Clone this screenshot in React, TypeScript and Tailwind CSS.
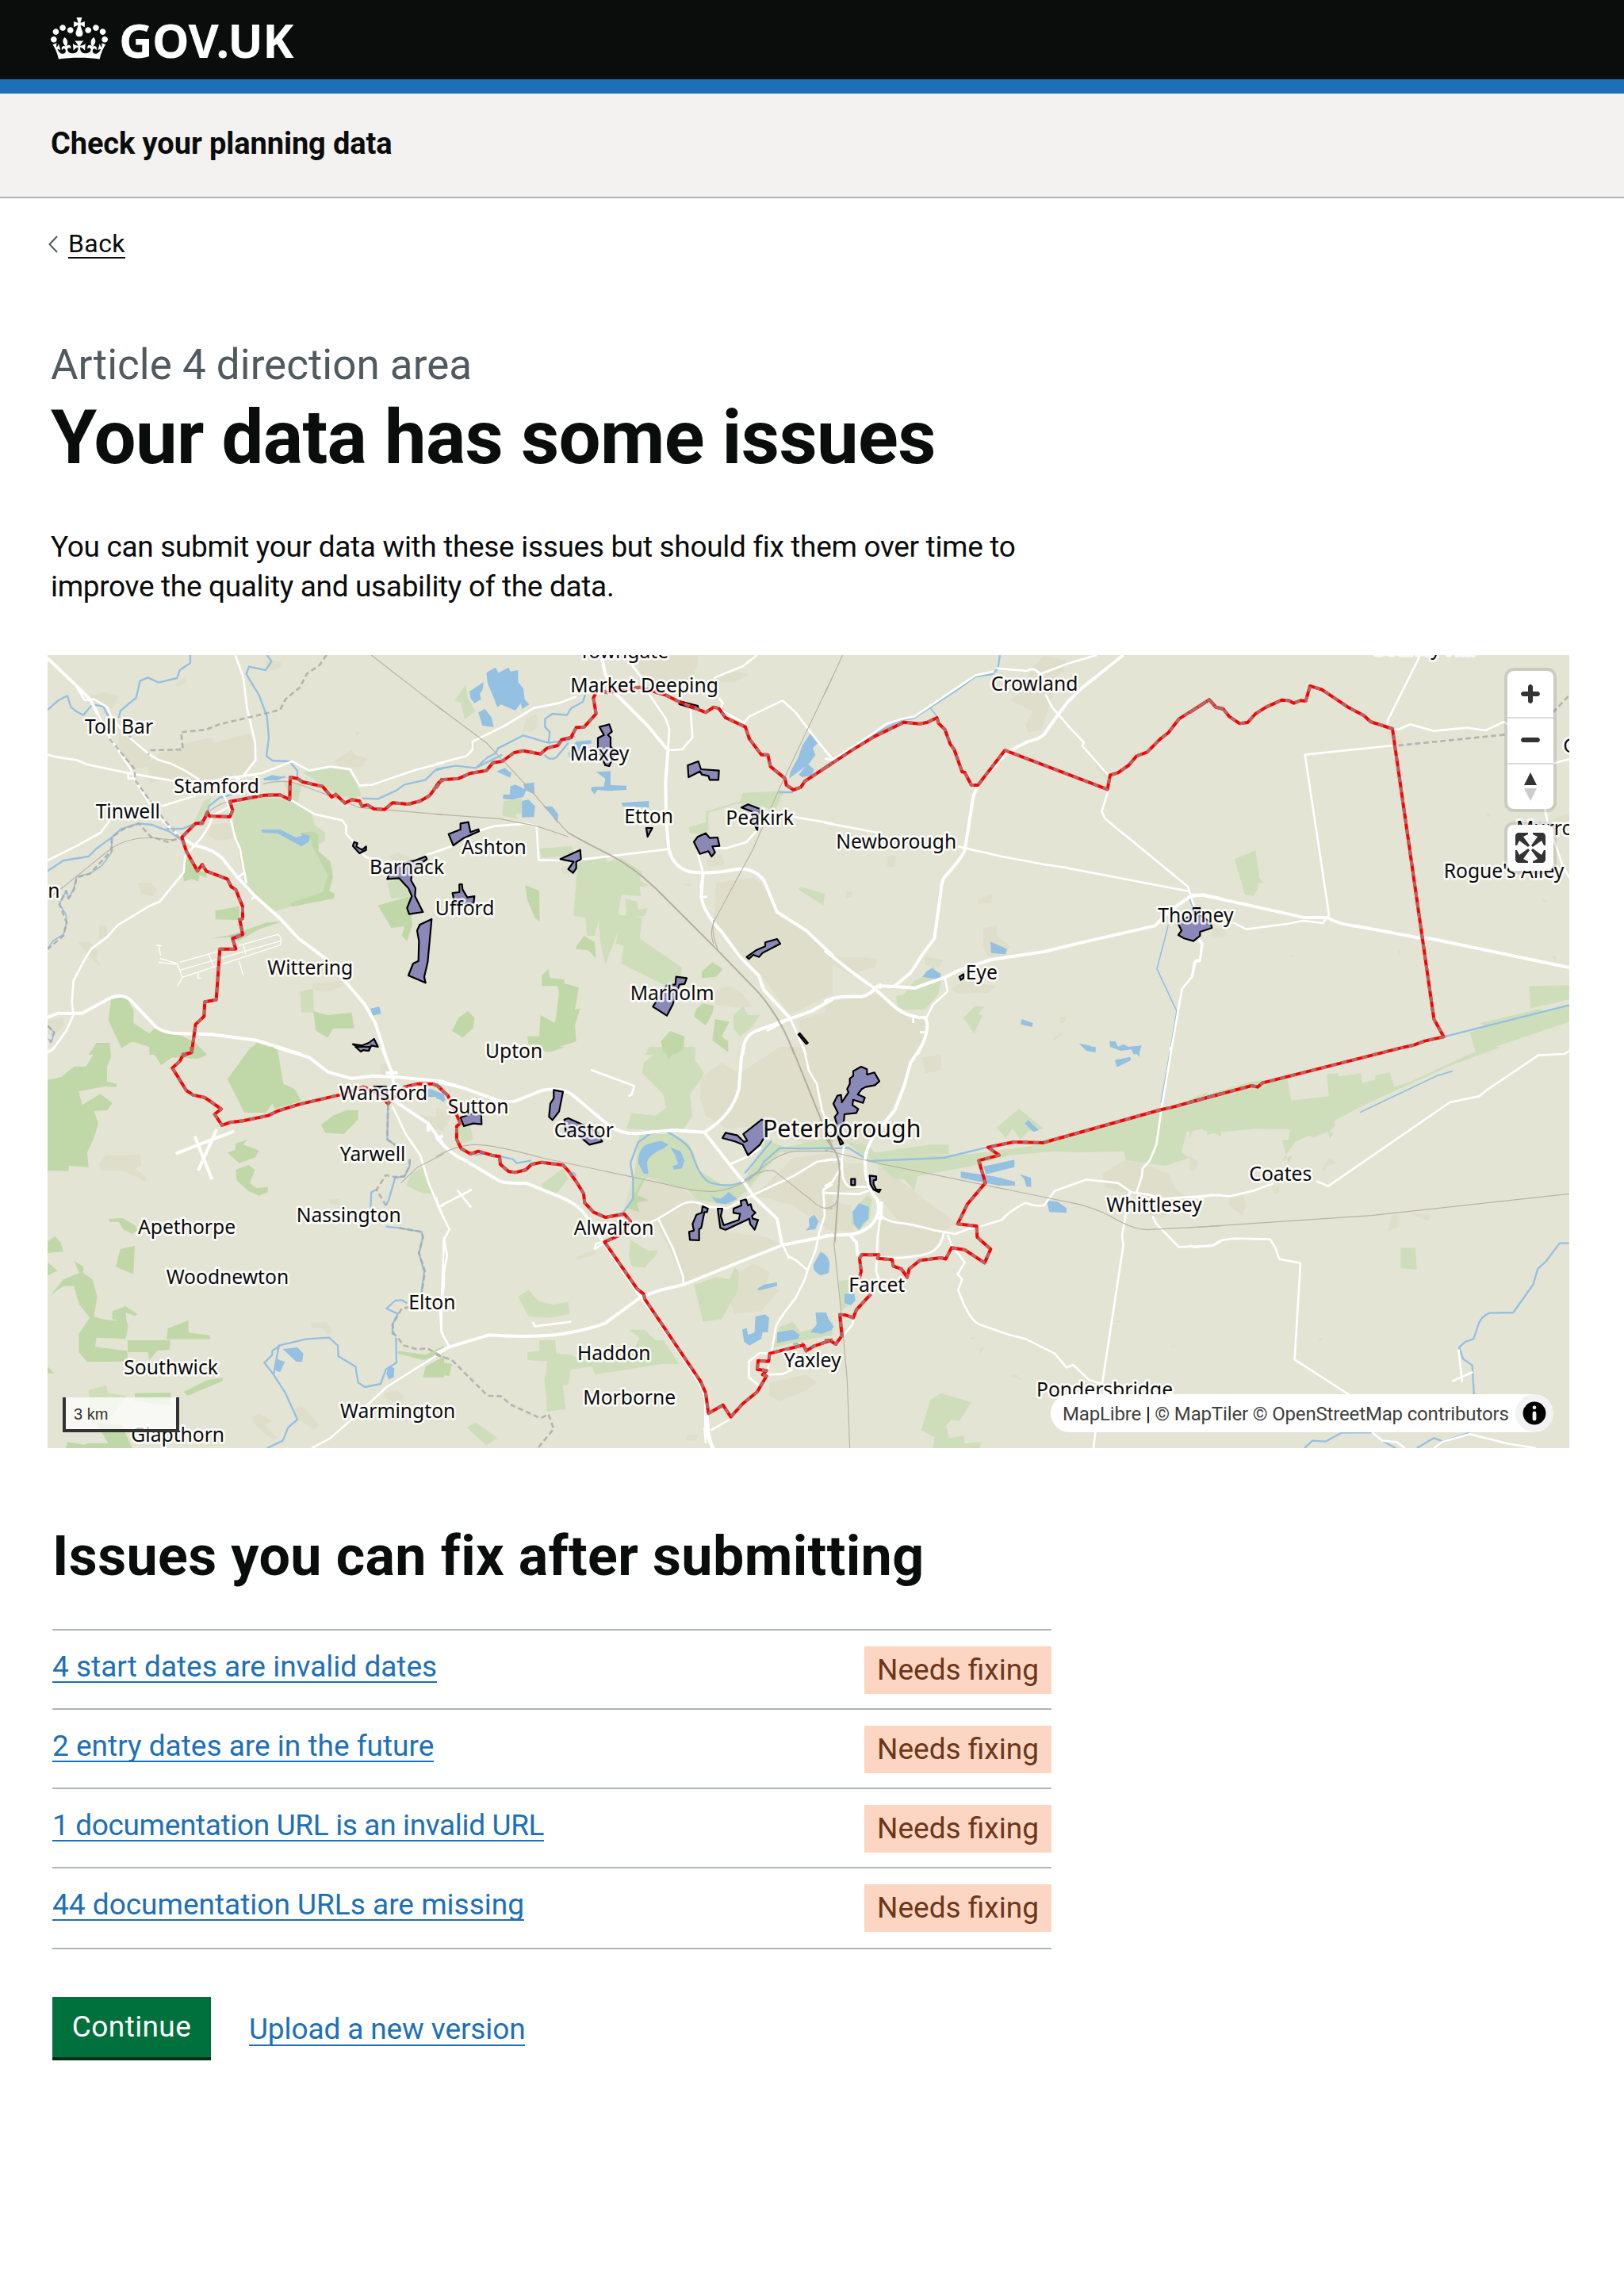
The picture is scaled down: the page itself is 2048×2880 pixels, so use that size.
type Tile = {
  at: [number, number];
  town?: string;
  park?: string;
  wood?: string;
  water?: string;
  river?: string;
  stream?: string;
  trunk?: string;
  road?: string;
  lane?: string;
  rail?: string;
  railMain?: string;
  county?: string;
  boundary?: string;
  area?: string;
  labels?: [string, number, number, number?][];
};

/* Map features, in thirds of a pixel, relative to each tile's origin. */
const tiles: Tile[] = [
  {
    at: [0, 0],
    town:
      "M150 175L215 160 270 175 240 220 180 200ZM480 130L520 100 525 120 495 138ZM380 430L420 390 500 370 520 350 620 330 630 350 760 315 785 350 787 410 740 470 690 490 600 495 470 490 385 500ZM270 300L330 340 390 400 380 440 320 450 270 380ZM620 660L700 650 705 710 640 720 605 700ZM820 40L880 40 885 60 840 80ZM1080 420L1150 375 1160 395 1210 410 1190 440 1150 445 1100 435ZM340 880L390 880 415 905 400 930 355 920ZM115 1105L160 1100 190 1140 185 1170 205 1200 160 1160ZM195 1040L225 1040 225 1090 195 1090ZM1000 1260L1110 1250 1120 1270 1050 1295 1005 1280ZM0 1400L60 1390 60 1420 20 1460 0 1450ZM1285 780L1330 765 1390 790 1340 810ZM1165 305L1180 310 1170 325Z",
    park:
      "M555 650L590 570 620 555 610 600 560 655ZM700 590L740 565 810 555 900 560 1000 620 1010 660 1050 690 1050 720 1010 740 1040 800 1080 830 1060 930 920 970 860 988 800 940 740 870 720 740 705 690ZM965 462L1050 440 1140 455 1170 500 1188 550 1160 560 1100 550 1040 510ZM895 500L960 505 955 540 945 580 920 565ZM1285 880L1340 860 1370 930 1300 940ZM955 1290L1005 1280 1008 1370 960 1370Z",
    wood:
      "M530 770L560 830 605 840 600 860 575 850 570 875 545 865 515 875 512 840ZM960 690L1005 685 1025 700 1025 760 1070 800 1080 860 1065 910 1085 920 1085 938 925 970 920 955 1040 915 1060 850 1000 740 1000 720ZM635 985L725 968 725 1020 635 1018ZM620 1090L700 1075 830 1030 890 1025 800 1055 720 1100 690 1085ZM1250 965L1370 930 1380 1040 1360 1100 1340 1080 1350 1045 1300 1050ZM1005 1365L1060 1380 1150 1370 1160 1430 1080 1430 1060 1465 1015 1440ZM240 1320L295 1310 325 1360 325 1410 385 1450 385 1500 320 1480 280 1505 230 1400ZM405 1430L500 1455 560 1485 603 1530 385 1530 385 1450ZM185 1485L235 1485 240 1530 155 1530ZM790 1485L868 1510 870 1530 750 1530Z",
    water:
      "M808 678L880 678 940 708 965 700 955 690 992 702 990 722 960 742 870 692 812 690ZM815 485L850 472 895 480 870 492 820 492ZM690 1080L750 1065 750 1075 720 1095 695 1088ZM1222 1355L1255 1348 1262 1375 1230 1382Z",
    river:
      "M0 225L40 190 75 172 88 215 110 232 135 245 170 205 210 212 230 250M270 255L275 230 310 200 335 180 350 115 380 103 420 122 490 105 500 75 540 48 540 18M830 18L847 42 825 75 762 62 752 90 800 170 815 210 830 250 837 330 828 400 850 417 915 420 945 455 945 480M840 490L900 478M510 720L460 685 395 660 345 655 280 675 240 710 185 750 155 780 60 795 0 835M450 675L510 675 560 655 600 635 610 590 650 558 700 545M1190 560L1250 562 1320 530 1350 508 1430 490 1465 455 1500 445",
    stream:
      "M240 710L245 760 205 815 160 845 110 855 100 900 78 940 70 910 45 960 70 1000 72 1030 60 1075 20 1100 0 1130M0 1420L25 1445 15 1480 0 1470",
    trunk:
      "M0 30L105 130 160 185 190 240 M510 712L555 738Q620 750 660 785L720 860 785 930 880 1015 950 1090 1050 1165 1120 1245 1200 1340 1240 1410 1278 1530M0 1388L40 1373 130 1373 210 1330Q270 1290 310 1320L410 1425Q440 1448 500 1450L620 1453 790 1475 960 1528",
    road:
      "M190 240L235 330 315 450 330 490 385 580 440 650 510 712M105 130L140 188 175 185 225 215 245 260 310 330 380 390 420 415 470 430 520 455 575 490M0 395L30 403 110 415 150 432 300 463 470 493 600 500 700 480 790 470 M740 475L810 465 925 420 990 455 1070 440 1145 450 1180 512 1230 508 1400 450 1500 425M710 18L740 100 755 220 785 350 787 415 740 475 720 490 705 475M0 795L110 740 200 690 235 645 M430 590L560 550M665 545L690 600 695 650 710 710 728 750 750 875M690 590L625 625 610 665 585 705 520 780 515 840 425 950 380 970 265 1040 225 1085 165 1130 140 1170 98 1250 92 1330 98 1380 70 1440 20 1510 0 1522M920 565L1010 620 1115 643 1130 665 1130 695 1180 750 1200 780 1250 800M1430 775L1500 752M305 465L305 485 330 485M720 860L745 840 752 880M785 930L772 942",
    lane:
      "M500 1210L880 1100M500 1180L870 1075Q890 1085 880 1115L510 1237 490 1185M410 1115L430 1118M420 1115L428 1155M425 1165L490 1185M420 1180L485 1188M510 1237L490 1272M725 1175L740 1230M570 1220L568 1240 580 1240M610 1150L630 1200M740 1110L750 1150",
    rail:
      "M1225 18L1500 232M0 940L60 895 240 750Q310 705 400 710L480 718 M610 610Q640 585 680 573M815 505Q900 485 960 510L1080 555 1180 595 1500 622",
    county:
      "M1055 18L1030 55 980 90 955 140 900 185 880 225 820 240 650 280 600 300 505 310 512 375 390 378 380 395M315 330L280 300M235 335L330 450 330 490 440 640 500 710 455 725 390 705 345 655 290 675 245 705 240 760 160 845 110 860 100 905 80 938 70 910 45 960 72 1030 60 1080 0 1130M0 1420L25 1445 10 1485",
    boundary:
      "M1500 488L1480 500 1460 530 1445 550 1410 570 1365 582 1305 577 1275 602 1235 600 1210 585 1190 590 1180 570 1150 565 1125 578 1090 545 1075 555 1040 515 965 498 945 485 918 480 916 565 880 547 820 548 690 572 700 605 690 630 612 627 605 612 585 655 560 655 508 707 525 760 567 835 585 810 600 835 680 865 695 895 712 905 738 970 738 1015 727 1018 738 1075 700 1090 712 1130 652 1130 638 1322 595 1330 592 1385 560 1415 545 1522 508 1530",
    area:
      "M1155 740L1160 725 1172 730 1168 742 1190 755 1205 742 1205 755 1180 768ZM1285 865L1300 830 1345 805 1390 795 1430 780 1435 790 1380 830 1375 870 1392 900 1390 930 1420 990 1368 998 1360 975 1378 930 1365 900 1330 862ZM1408 1038L1453 1017 1438 1180 1425 1235 1430 1258 1365 1230 1383 1185 1403 1175 1405 1100 1398 1060ZM1155 1490L1190 1495 1215 1485 1235 1470 1250 1500 1225 1495 1215 1515 1185 1510Z",
    labels: [["Toll Bar", 145, 318], ["Stamford", 482, 543], ["Tinwell", 186, 638], ["n", 5, 938], ["Barnack", 1222, 848], ["Wittering", 836, 1229]],
  },
  {
    at: [1470, 0],
    town:
      "M340 260L380 240 385 290 360 310 330 300ZM760 20L990 20 990 60 960 110 880 130 800 110 770 80ZM1040 100L1130 80 1190 90 1130 120 1060 120ZM1020 790L1080 770 1090 810 1030 820ZM1060 880L1200 860 1250 900 1290 990 1400 1060 1500 1150 1500 1300 1340 1380 1230 1230 1150 1150 1050 1010ZM470 820L540 810 530 850 480 845ZM920 885L970 880 960 892ZM1040 1290L1110 1270 1160 1300 1200 1350 1130 1350 1060 1340ZM1370 1400L1500 1360 1500 1530 1400 1530ZM130 350L150 350 145 372 130 370Z",
    park:
      "M70 190L112 130 120 180 148 230 108 262 95 200ZM255 570L325 562 325 615 300 620 310 640 250 625ZM390 750L510 740 530 780 470 780 400 785ZM540 800L640 785 650 800 700 785 780 840 770 870 805 890 770 895 775 930 700 925 690 1000 780 1010 770 1090 930 1200 925 1240 870 1270 700 1185 710 1120 680 1110 690 1060 640 1190 620 1100 615 1020 600 1080 570 1080 565 1010 520 1005 530 870ZM1160 540L1320 530 1280 610 1240 590 1140 580 1030 615 1030 680 1010 700 960 690 955 670 1020 650 1020 610 1150 570ZM1370 905L1380 895 1470 920 1465 965ZM1125 1380L1160 1345 1180 1380 1225 1380 1190 1430 1150 1460 1125 1430ZM805 1500L860 1500 880 1530 790 1530ZM715 940L760 950 765 980 800 975 790 1005 720 1010Z",
    wood:
      "M337 888L390 910 392 1025 375 1015 345 945ZM530 1120L560 1080 600 1105 605 1165 575 1135 530 1130ZM400 1230L425 1205 430 1240 485 1245 485 1260 540 1275 525 1360 545 1355 525 1420 530 1480 465 1500 420 1520 350 1490 345 1460 390 1460 395 1380 450 1410 465 1300 460 1270 400 1270ZM85 1390L120 1365 145 1390 140 1430 100 1465 60 1440ZM1005 1215L1045 1180 1085 1205 1060 1235 1005 1240ZM985 1355L1010 1335 1050 1345 1045 1375 1020 1420 975 1385ZM1055 1395L1110 1405 1080 1460 1105 1480 1105 1520 1045 1475ZM850 1480L885 1440 940 1460 935 1510 900 1530 860 1520Z",
    water:
      "M190 85L225 65 235 85 275 65 280 80 310 75 310 120 330 145 335 185 352 205 325 222 320 200 300 228 245 205 232 215 212 165 195 125ZM127 155L180 120 175 150 165 165 170 185 145 200 130 180ZM160 235L185 222 210 255 218 290 175 285ZM228 458L260 445 285 465 280 482ZM280 515L300 508 335 525 330 505 370 500 373 545 340 530 330 555 290 565 252 562 255 545 280 545ZM325 570L350 565 375 590 370 630 325 632ZM405 590L440 592 462 620 460 655 430 615ZM605 460L660 457 660 510 720 512 720 528 650 532 610 528 600 545 587 530 587 517 635 515 640 485ZM702 577L805 570 805 595 705 590ZM500 390L530 345 585 340 590 352 550 360 540 400 505 408ZM1415 315L1445 350 1425 370 1435 395 1410 430 1335 485 1340 460 1370 405 1385 360ZM1372 470L1405 430 1430 450 1420 475 1385 480Z",
    river:
      "M0 450L75 437 150 445 195 405 225 390 235 370 275 350 330 322 425 350 430 310 412 290 412 260 440 240 495 245 510 220 555 195 567 160M425 350L500 340 525 325M410 395Q430 420 455 405L500 350M150 445L250 395M1296 537L1350 537",
    trunk:
      "M627 30L640 90 680 165 800 285 877 378 M877 378L868 500 870 640 880 750Q895 820 960 838L1010 842 1080 838 1140 828Q1200 820 1240 870L1290 990 1400 1060 1500 1155M1010 842L1003 930Q1010 990 1080 1065L1150 1160 1220 1230 1240 1285 1340 1393M1160 1530Q1160 1460 1210 1440L1340 1393 1420 1365 1500 1320",
    road:
      "M0 430L115 400 138 375 138 345 260 285 370 218 465 200 530 175M740 55L775 100 805 165 870 260 882 300 877 378 930 375 970 330 962 220M1050 105L1160 60 1215 18M1070 180L1085 200 1075 225 1165 275 1185 250 1310 190 1360 235 1440 340 1500 412M160 683L220 665 340 656 380 665 388 793 470 795 560 790 880 752M0 762L60 740M990 770L1010 842M1040 748L1100 748 1175 725 1215 680 1230 640M1340 628L1500 655M1010 842L1000 900M1003 935L1025 932M1340 1393L1400 1530M1250 1440L1340 1393",
    rail: "M0 208L190 350 350 520 480 670 500 690M0 620L240 637 380 665 500 705M1500 100L1300 520 1200 750 1060 1010Q1030 1060 1050 1110M1050 1020Q1040 1070 1065 1130",
    railMain: "M500 690Q560 725 650 770T830 900L1060 1130 1220 1295Q1310 1400 1355 1530",
    boundary:
      "M0 520L20 490 85 485 130 465 190 455 215 425 250 420 295 387 330 380 395 392 420 370 460 360 475 338 510 330 530 292 560 290 605 240 595 180 610 150 650 160 770 140 870 170 920 195 1020 235 1050 215 1070 220 1095 255 1170 290 1185 335 1230 395 1255 395 1265 440 1320 485 1325 510 1352 528 1380 518 1395 495 1500 426",
    area:
      "M920 192L990 210 992 226 920 204ZM618 290L655 280 665 308 650 320 660 330 660 365 680 380 655 438 640 435 612 370 612 332 635 320ZM952 435L992 420 1002 450 1070 455 1068 490 1035 490 1030 475 1005 470 998 458 955 480ZM47 695L92 678 92 655 122 650 130 688 160 677 162 685 105 710 65 738ZM470 790L545 755 548 790 530 800 530 825 518 842 500 828 520 800ZM975 725L990 705 1020 692 1035 710 1065 708 1072 740 1045 742 1055 765 1042 780 1030 760 998 770ZM795 672L818 672 800 705ZM1155 595L1180 583 1225 600 1215 680 1200 650 1195 610ZM62 918L88 915 88 885 98 885 100 905 118 935 145 930 142 955 70 960ZM1175 1160L1210 1135 1245 1120 1245 1105 1290 1092 1302 1110 1235 1145 1222 1160 1200 1152 1183 1168ZM820 1348L875 1265 905 1265 908 1235 948 1240 940 1262 920 1265 895 1340 873 1382ZM1370 1453L1376 1449 1406 1485 1400 1489Z",
    labels: [["Towngate", 545, 32], ["Market Deeping", 512, 161], ["Maxey", 510, 418], ["Etton", 716, 657], ["Peakirk", 1100, 662], ["Ashton", 100, 773], ["Ufford", 0, 1005], ["Marholm", 738, 1325]],
  },
  {
    at: [2940, 0],
    town:
      "M790 60L830 20 915 40 900 80 870 110 860 180 820 300 770 310 760 280 790 230 700 190 740 160 770 100ZM1015 400L1075 460 1070 490 1030 450ZM235 780L270 775 265 820 235 820ZM80 910L105 915 100 935 80 935ZM580 940L635 925 630 955 580 960ZM600 1050L650 1040 650 1080 700 1120 680 1160 620 1160 600 1120ZM0 1140L50 1160 140 1160 200 1170 190 1200 150 1210 100 1230 0 1170ZM380 1160L450 1170 430 1200 380 1190ZM480 1280L530 1250 650 1270 620 1295 500 1300ZM0 1330L150 1310 210 1300 300 1380 390 1400 380 1460 330 1530 0 1530ZM890 1390L915 1385 905 1410 890 1410ZM860 1470L900 1440 905 1450 870 1475Z",
    park: "M270 1310L300 1300 340 1250 380 1230 410 1190 440 1250 430 1300 380 1360 300 1360 275 1345ZM525 1390L570 1345 605 1350 580 1375 598 1380 565 1450Z",
    water:
      "M370 1235L385 1215 405 1202 440 1225 435 1245 400 1240ZM627 1102L690 1130 685 1150 630 1145ZM745 1395L788 1410 785 1425 742 1415ZM962 1487L1000 1495 1025 1505 1020 1520 990 1515ZM1078 1478L1100 1480 1110 1500 1130 1490 1150 1500 1200 1495 1190 1520 1170 1530 1160 1510 1120 1515 1080 1500Z",
    river: "M663 18L655 70 635 90 570 100 500 150 340 255 280 268 190 315 100 378",
    stream: "M400 218L425 250M1380 920L1395 965M1300 1040L1257 1205 1332 1365 1305 1530",
    trunk:
      "M1130 18L970 145 920 195 878 250 830 318Q815 335 770 345L690 385 580 510 563 550 530 755Q520 785 460 850 440 870 440 910L415 1090 370 1150Q340 1200 325 1220L265 1270M0 1135L100 1215 190 1280 260 1345Q310 1390 380 1390 405 1430 350 1530M0 1330Q30 1305 140 1310 170 1305 200 1270 260 1270 340 1278L460 1235 510 1210 630 1170 830 1140 960 1108 1250 1042 1300 990 1385 930 1430 925 1500 940",
    road:
      "M650 68L765 78Q790 60 815 90L920 50 960 38 1030 18M835 165L860 215 930 295 980 348 975 362 1080 480 1070 540 1048 610 1060 635 1100 670 1150 710 1375 895 1385 930M0 410L30 415 190 310 230 280 290 260 340 250 570 95 640 80M0 378L30 410M0 652L200 690 M505 742L670 780 830 810 900 820 1380 912M455 1240L465 1290 410 1340 385 1390M1385 930L1398 970M1420 1095L1430 1110 1420 1175 1403 1178 1390 1235 1352 1280 1308 1530M335 1390L335 1410M380 1445L360 1445M210 1260L210 1280",
    rail: "M68 18L0 165",
    boundary:
      "M0 446L100 380 190 325 300 272 360 278 390 272 425 255 430 275 455 300 475 355 490 375 520 460 530 462 555 510 580 510 682 378 1070 526 1080 472 1110 463 1150 435 1180 400 1220 385 1270 335 1300 312 1340 260 1455 187 1480 215 1510 222",
    area:
      "M510 1235L525 1225 525 1240 515 1247ZM1395 975L1420 975 1420 1000 1460 1030 1465 1050 1420 1065 1420 1080 1395 1100 1360 1090 1338 1077 1350 1060 1335 1030 1395 1000Z",
    labels: [["Crowland", 633, 155], ["Newborough", 47, 752], ["Eye", 537, 1247], ["Thorney", 1265, 1030]],
  },
  {
    at: [4320, 0],
    town:
      "M745 310L770 305 810 350 790 360ZM1120 610L1140 625 1130 632ZM1350 650L1437 615 1437 680 1370 660ZM375 1150L400 1155 395 1162ZM90 1050L140 1050 130 1085 85 1090ZM790 1130L800 1135 790 1160ZM1370 1155L1390 1155 1385 1180ZM1330 940L1355 950 1340 955Z",
    park: "M170 790L250 757 265 860 280 880 258 880 258 905 240 930 210 925ZM1285 1270L1437 1267 1437 1320 1290 1355ZM1100 1410L1330 1355 1335 1370 1437 1340 1437 1405 1085 1525 1060 1445 1120 1425Z",
    river: "M962 1462L1437 1342",
    stream: "M0 940L15 975",
    trunk: "M0 925L60 928 430 1010 525 1012Q560 1035 640 1045L870 1088 920 1092 1437 1200",
    road:
      "M870 25L750 265 748 285M770 300L795 298 835 280 925 305 1050 293 1120 303 1190 270 1215 290M1375 428L1437 412M770 360L437 395 528 1000 505 1032 430 1023 370 1035 215 1055 165 1030M1345 600L1355 650 1390 750 1410 810 1437 860M35 1095L47 1110 40 1170 20 1175 8 1240",
    county: "M790 360L1205 318M1375 235L1437 170",
    boundary:
      "M0 236L75 187 100 215 128 222 150 250 190 277 220 273 250 240 290 215 350 188 375 190 395 200 420 190 440 192 456 135 500 148 600 215 660 247 685 270 768 297 925 1395 962 1462 890 1478 850 1493 800 1504",
    labels: [["Gedney Hill", 690, 19], ["G", 1418, 390], ["Murrow", 1240, 700], ["Rogue's Alley", 966, 862]],
  },
  {
    at: [0, 1500],
    town:
      "M195 445L220 410 290 410 350 408 355 450 330 460 375 495 370 510 290 470 200 470ZM1260 65L1300 65 1300 110 1260 110ZM1400 255L1500 270 1500 320 1440 300ZM1060 575L1105 575 1105 600 1070 595ZM995 1045L1055 1040 1080 1080 1060 1088 1040 1065 1000 1062ZM775 1400L800 1385 850 1415 820 1430 870 1480 850 1485 780 1425ZM930 1370L960 1355 1030 1430 1010 1450 940 1400ZM1270 1310L1320 1300 1350 1320 1330 1350 1280 1330Z",
    park: "M1375 480L1420 455 1465 555 1420 555 1357 525ZM155 1300L220 1280 230 1310 300 1320 200 1450 170 1420 160 1380Z",
    wood:
      "M0 125L50 115 100 75 145 75 190 0 235 0 240 40 225 75 225 130 260 140 262 152 215 150 118 168 130 220 200 178 245 213 225 240 175 242 192 290 175 345 150 400 155 455 80 450 80 470 0 468ZM385 0L550 0 603 30 570 45 470 40 430 70ZM770 0L868 0 892 140 935 160 960 205 860 235 850 215 825 250 745 250 680 122ZM1035 295L1080 260 1130 240 1175 240 1175 275 1120 330 1050 325ZM680 400L710 390 712 365 755 352 740 370 800 392 785 418 725 440ZM712 465L760 447 785 465 765 515 790 535 833 530 833 550 800 563 760 545 715 505ZM232 650L285 648 330 675 340 695 320 708 285 690 270 663 235 662ZM0 735L28 717 50 740 60 775 0 780ZM275 765L330 753 325 860 258 832ZM0 815L38 847 0 865ZM100 810L137 832 135 855 170 880 188 945 175 1020 205 1030 300 1040 305 1055 295 1105 185 1100 180 1135 300 1150 305 1190 150 1192 118 1155 118 1085 160 1025 120 975 100 905 60 905 12 938 60 880 120 855ZM245 1000L295 982 340 1010 330 1018 295 1005 300 1045 245 1030ZM455 1065L533 1035 533 1080 615 1092 615 1106 450 1106ZM303 1110L465 1110 462 1145 415 1150 385 1185 380 1155 303 1155ZM515 1305L600 1262 665 1250 660 1265 530 1320ZM330 1310L465 1308 468 1355 330 1340ZM180 1420L280 1430 320 1518 70 1518 75 1495 140 1505 150 1500 230 1500ZM1325 1150L1430 1165 1500 1130 1500 1160 1420 1185 1325 1160ZM1430 1210L1500 1170 1500 1250 1420 1250ZM0 1210L25 1235 0 1235Z",
    water:
      "M890 1143L945 1137 968 1160 963 1192 940 1190ZM865 1180L898 1192 880 1230 862 1225ZM1290 1208L1312 1215 1310 1250 1290 1258 1282 1235ZM1420 160L1450 160 1500 180 1500 210 1470 190 1430 190Z",
    river:
      "M830 1518L890 1490 910 1440 945 1410 900 1310 855 1240 875 1130 980 1105 1065 1100 1098 1130 1100 1170 1165 1210 1175 1270 1200 1287 1260 1275 1280 1220 1320 1195 1318 1100M855 1240L820 1195 850 1165 850 1150 880 1130M1288 220L1285 350 1320 375M1370 425L1370 450 1350 490 1315 495 1305 530 1290 580 1280 600M1245 540L1225 550 1222 610M1280 680L1330 685 1415 700 1420 720 1405 780 1425 850 1415 930M1360 970L1340 958 1315 960 1282 990 1325 1010 1305 1050 1305 1090",
    trunk:
      "M860 0L990 40 1060 95 1150 120 1230 110 1330 115 1500 132M1265 0L1300 90 1310 140 1320 210 1440 290 1500 375M1280 98L1325 98M1480 350L1495 335M1440 290L1440 320M485 404L706 319M557 338L622 502M640 312L570 468",
    road:
      "M0 20L30 0M1305 225L1355 330 1410 410 1440 510 1480 605 1500 650M1480 605L1500 600M1500 720L1490 980 1490 1070 1500 1100M1000 1518L1070 1480 1150 1410 1285 1285 1500 1150",
    rail: "M1500 405L1400 455 1337 515",
    county:
      "M1288 220L1285 350 1320 375M1370 425L1370 450 1350 490 1310 492 1280 485 1245 540 1280 600M1330 685L1415 700 1420 720 1405 780 1428 850 1415 930M1370 985L1340 990 1305 1050 1310 1085 1350 1130 1400 1145 1435 1140 1500 1175",
    boundary:
      "M545 0L545 20 510 35 500 55 472 80 525 165 550 182 595 192 657 235 632 255 660 297 690 286 740 280 835 260 870 243 950 218 1105 182 1195 152 1240 170 1288 215 1330 170 1350 152 1400 140 1455 140 1480 150 1500 172",
    area: "M1165 0L1220 0 1215 15 1195 12 1185 18ZM1235 150L1280 150 1290 200 1270 200Z",
    labels: [["Wansford", 1107, 202], ["Yarwell", 1110, 433], ["Nassington", 945, 665], ["Apethorpe", 346, 710], ["Woodnewton", 453, 898], ["Elton", 1370, 995], ["Southwick", 293, 1241], ["Glapthorn", 320, 1497], ["Warmington", 1111, 1406]],
  },
  {
    at: [1470, 1500],
    town:
      "M1000 120L1080 60 1150 100 1300 0 1500 0 1500 400 1200 300 1100 310 1020 260 1000 200ZM740 500L900 520 1000 580 1050 610 1100 700 1250 720 1310 750 1120 820 940 890 880 760 830 660 700 650ZM1200 560L1350 600 1500 700 1500 400 1350 420 1250 520ZM1150 850L1200 820 1260 850 1250 900 1300 920 1230 1000 1130 1010 1110 960ZM1260 1270L1400 1240 1440 1270 1400 1300 1300 1340 1260 1320ZM945 1470L1000 1465 980 1490 945 1490ZM540 790L610 760 600 790 520 805ZM0 230L60 250 40 300 0 300Z",
    park:
      "M785 60L860 0 980 0 980 50 1015 100 990 140 960 180 970 260 930 320 720 310 740 250 830 260 870 230 860 180 780 100ZM770 330L900 330 960 370 1000 470 1080 520 1160 515 1250 350 1320 380 1500 340 1500 390 1300 400 1180 540 1110 600 990 580 950 540 780 490 750 560 730 610 750 480ZM85 300L130 300 140 350 90 370ZM400 520L480 460 500 500 450 560 405 545ZM735 730L800 770 840 770 830 790 790 835 740 830 730 790ZM975 900L1060 870 1110 880 1130 835 1145 850 1143 920 1080 1030 1010 1040ZM310 945L350 920 385 960 440 975 500 965 505 1010 430 1025 350 1020ZM345 1155L390 1150 390 1110 450 1110 455 1160 515 1165 545 1190 640 1180 740 1160 770 1100 730 1070 790 1070 830 1110 860 1110 920 1200 850 1200 600 1240 590 1210 510 1220 500 1280 480 1280 490 1370 420 1380 410 1260 420 1190 345 1185ZM115 1440L150 1420 232 1480 190 1508ZM1300 1060L1350 1040 1380 1080 1500 1040 1500 1090 1350 1120 1270 1140Z",
    wood: "M420 0L490 0 430 20ZM0 1190L60 1200 50 1245 0 1240ZM860 0L910 0 880 50ZM780 500L800 480 760 560 805 580 760 590 770 625 720 610Z",
    water:
      "M765 440Q765 380 800 368L850 355 880 370 860 385Q800 410 798 440L803 480 785 480ZM885 380L925 395 940 430 930 460 900 465 895 450 915 445 905 410ZM1040 565L1075 575 1095 560 1105 548 1140 575 1095 595 1060 590ZM1455 775Q1490 790 1488 830 1480 860 1455 865 1425 850 1427 825ZM1397 695L1412 680 1410 650 1430 635 1447 660 1435 690ZM1215 915L1240 900 1290 890 1290 905 1220 922ZM1208 1020L1245 1012 1260 1025 1255 1080 1235 1080 1230 1105 1185 1130 1165 1115 1158 1070 1175 1063 1180 1090 1205 1080ZM1290 1080L1350 1070 1375 1090 1370 1105 1290 1120ZM1435 1005L1475 1005 1500 1070 1460 1085 1415 1080 1440 1050ZM0 170L30 185 35 205 0 195Z",
    river:
      "M705 630L745 575 745 500 735 440 765 360 810 328 870 320Q960 365 970 410 1000 500 1040 515 1110 535 1160 510L1220 470 1240 435 1300 383 1400 385 1500 382M1168 478L1270 355M245 415L290 425 305 440 360 430M145 408L180 405M515 475Q530 480 525 490",
    trunk:
      "M0 130L100 155 200 190Q260 215 300 205L400 165Q480 150 520 185L650 295Q700 330 760 328L900 315 1015 323 1110 445 1170 520 1200 565 1290 650 1308 745M1015 323Q1120 260 1145 160L1155 40 1165 0M0 340Q50 405 110 430L240 508 Q270 518 340 515L450 560Q530 590 560 630L620 720 770 940 830 1020 990 1260Q1010 1290 1020 1340L1020 1420Q1020 1480 1050 1518M770 950L640 1045Q580 1070 450 1090 330 1100 200 1090L50 1135 0 1160M790 940L850 920 935 900 1120 825 1310 750 1500 712M30 135L120 160M0 350L18 340M1022 1340L1030 1460 1045 1518",
    road:
      "M1110 445L1190 410 1230 380M800 670L840 650 930 595Q970 575 1030 605L1100 610 1200 560 1350 490 1440 435 1500 425M840 650L895 760 935 870 935 905M0 570L10 610 50 690 30 730 42 790 30 850 30 900 15 1000 20 1080 50 1135M10 605L135 540M80 542L132 607M585 87L750 148 740 180 728 187M365 1040L373 1057 512 1040M1390 0L1410 90 1440 140 1460 240 1495 320M1310 745L1330 790 1365 810 1405 845 1395 880 1360 950Q1290 1040 1285 1060L1270 1150 1250 1240 1310 1238 1350 1220M1405 845L1435 770 1450 700 1470 640 1465 540 1500 520M1460 550L1500 555M1260 1160L1225 1158 1183 1190 1183 1250 1220 1280M1040 1450L1110 1410M1020 1500L1015 1440M640 740L600 765 605 745 640 735M1330 800L1345 795",
    rail: "M0 415Q80 370 150 370T400 420L850 515Q980 550 1050 547 1130 540 1190 495 1240 460 1280 470L1420 580Q1460 620 1500 610M1180 510Q1280 400 1360 395L1500 395M1500 360L1470 300",
    railMain: "M1345 0L1450 260 1500 390",
    county: "M0 1165L60 1185 195 1320 245 1322 285 1355 395 1405 425 1390 445 1445 385 1518M1350 1125L1390 1120",
    boundary:
      "M0 143L45 185 70 240 92 290 78 300 78 350 95 385 130 405 160 395 210 410 240 415 243 445 275 472 300 475 340 465 360 445 400 437 480 447 505 475 530 510 558 555 562 590 595 625 640 645 712 632 735 660 700 710 637 738 760 915 785 935 790 955 1000 1265 1020 1310 1030 1387 1085 1355 1115 1400 1160 1350 1215 1305 1250 1245 1235 1240 1250 1225 1215 1220 1218 1187 1258 1190 1262 1160 1390 1128 1400 1150 1430 1132 1500 1108",
    area:
      "M92 268L170 240 172 293 140 290 105 300ZM445 163L480 170 465 245 440 277 427 265 432 215 445 195ZM485 275L500 270 545 290 610 320 628 358 580 370 545 340 490 320ZM1083 345L1095 325 1140 335 1165 360 1177 355 1162 330 1232 275 1245 280 1240 345 1225 370 1180 410 1160 370 1130 358ZM1008 603L1028 612 1025 625 1015 625 1003 685 995 690 995 732 960 730 957 700 975 695 970 670 985 635 1005 628ZM1065 612L1083 612 1077 640 1088 675 1145 655 1150 632 1125 628 1125 612 1155 600 1152 583 1172 577 1180 600 1190 595 1195 615 1208 628 1195 640 1198 650 1218 655 1205 692 1188 670 1185 650 1095 692 1075 685Z",
    labels: [["Upton", 190, 44], ["Sutton", 48, 254], ["Castor", 450, 345], ["Peterborough", 1240, 344, 1], ["Alwalton", 525, 713], ["Haddon", 538, 1187], ["Morborne", 560, 1356], ["Yaxley", 1320, 1213]],
  },
  {
    at: [2940, 1500],
    town:
      "M0 0L350 0 300 130 240 260 160 400 90 360 0 380ZM370 40L440 30 440 90 380 100ZM200 440L330 540 500 670 440 700 280 660 200 560ZM0 440L150 440 170 530 0 560ZM210 650L330 680 450 705 400 780 210 790ZM1050 480L1135 430 1200 440 1300 480 1330 540 1390 580 1290 640 1240 650 1170 560 1060 530ZM0 580L100 600 110 700 0 690ZM550 1100L570 1095 560 1110ZM580 1145L605 1135 590 1160ZM700 1245L720 1235 745 1260ZM1090 1040L1120 1035 1115 1042ZM1305 1140L1325 1125 1325 1135Z",
    park:
      "M650 305L735 235 780 270 830 310 770 320 740 350 710 310 685 345ZM80 360L160 370 190 400 400 370 470 370 470 405 350 405 500 410 600 400 820 370 1500 175 1500 340 1440 310 1370 320 1350 400 1380 420 1290 450 1140 430 1130 395 960 400 870 395 700 410 560 450 350 490 340 545 300 500 260 500 200 440 130 400ZM110 620L160 560 180 580 170 650 130 695 100 670ZM55 885L100 880 100 900 120 960 60 1000ZM400 1335L440 1310 555 1345 510 1415 480 1410 420 1480 365 1450ZM415 1480L460 1435 470 1480 525 1470 530 1500 590 1495 588 1518 410 1518ZM1390 195L1450 170 1440 190Z",
    water:
      "M105 625L130 592 168 605 165 650 145 670 130 692 110 670ZM600 452L718 427 718 455 610 482ZM515 472L640 490 720 510 720 525 660 525 515 495ZM738 482L780 495 782 530 762 528 755 500ZM840 582L880 585 915 610 915 628 850 625ZM757 290L770 277 810 315 790 322ZM75 935L112 930 115 960 100 977 75 970ZM0 1005L15 1030 35 1060 0 1080ZM0 790L18 820 15 855 0 862ZM988 0L1025 0 1025 20 990 10ZM1098 50L1155 38 1160 50 1105 77ZM1170 0L1193 0 1190 38 1175 20Z",
    river: "M0 385L90 382 170 432 450 420 615 380",
    stream: "M1308 10L1273 210",
    trunk:
      "M365 0L325 60 300 150 265 240 215 300Q155 370 153 430L155 480Q165 540 200 580 215 640 170 680 130 710 90 710L0 715M95 710L120 740 125 790M215 585L213 650 190 640",
    road:
      "M73 375L65 430 68 490Q80 530 100 530L170 530M0 528L30 510 65 450M0 430L60 425M0 553L130 557 175 540M215 640Q240 665 300 668 350 675 420 695L495 708 540 690 570 685 670 655Q700 620 760 590 800 605 830 600 L870 545 990 502 1110 515 1160 550 1230 560 1280 575 1500 560M450 705Q440 770 380 785 300 805 200 795M210 650L200 720 195 850 205 880M465 710L480 750 530 815 503 860 520 880 505 920 525 970Q560 1050 600 1055L700 1090 760 1105 870 1160 915 1213 940 1203 1000 1260 1050 1275 1130 750 1125 715 1155 545M1308 0L1310 20 1275 230 1255 370 1230 430 1203 460 1200 490 1180 550M1240 640L1255 670 1340 757 1470 752 1500 735M110 1030L105 1050 40 1130M1025 1450L1017 1518",
    rail: "M0 390L60 405 200 440 420 485 960 595Q1020 610 1080 640 1160 690 1220 692L1500 677M0 610Q40 610 47 580M35 740L65 1030 85 1260 95 1518M0 310L40 400",
    railMain: "M0 340L40 395Q60 430 55 500L45 640 38 740",
    boundary:
      "M0 1112L20 1110 42 1125 65 1093 57 1013 80 1015 108 1025 120 995 175 935 M130 880 L138 850 132 800 140 787 205 787 200 800 255 805 260 830 290 840 312 872 320 840 360 808 440 798 458 803 480 760 530 768 605 817 628 765 577 720 575 678 503 670 540 595 608 515 583 430 660 410 618 380 715 360 825 363 1275 237 1310 230 1500 177",
    area:
      "M108 92L138 75 160 85 160 105 188 97 207 130 190 145 155 152 140 160 125 180 152 192 145 212 108 200 105 220 127 235 120 250 75 255 72 285 62 290 55 340 70 365 60 370 50 340 45 290 38 265 50 250 33 215 48 185 62 182 65 210 90 172 85 160 95 140 95 120 108 110ZM100 500L115 500 115 523 100 523ZM170 487L195 490 195 503 185 505 185 520 195 540 212 540 205 550 185 540 173 520Z",
    labels: [["Farcet", 95, 929], ["Whittlesey", 1070, 627], ["Pondersbridge", 805, 1325]],
  },
  {
    at: [4320, 1500],
    town:
      "M0 410L35 435 20 470 0 470ZM150 570L205 565 215 600 200 640 150 600ZM500 460L530 420 555 440 520 450 510 475ZM310 530L340 525 340 555 320 555ZM765 635L790 635 790 680 750 700ZM830 630L910 635 905 660ZM485 1100L505 1105 495 1112Z",
    park:
      "M0 200L240 130 370 118 385 203 527 187 520 102 563 100 565 112 648 100 655 137 702 125 705 108 758 97 775 150 830 135 970 70 1100 10 1140 0 1180 0 990 70 650 225 548 280 550 300 530 320 545 328 530 347 525 320 465 345 455 335 400 360 350 430 390 410 375 440 350 355 375 350 380 312 250 310 100 325 68 333 65 320 40 310 10 320 0 350ZM800 760L855 760 860 842 798 838ZM1080 0L1130 0 1085 18Z",
    river:
      "M1437 743L1400 743 1380 770 1350 810 1318 840 1300 900 1225 1005 1135 1007Q1100 1020 1090 1060L1075 1105 1045 1115 1020 1137 1035 1180 1070 1205 1077 1320M435 1518L465 1490 515 1493 575 1460 690 1458 730 1490 780 1518M860 1518L925 1480 960 1493 1060 1460",
    stream: "M645 248L935 110 995 92",
    road:
      "M0 568L40 570 80 560 155 565 240 545 320 515M480 508L525 527 985 210 1095 187 1130 160 1320 32 1420 27 1437 15M0 752L20 758 85 752 120 732 170 725 305 728 325 760 340 803 420 818 398 1183 610 1320M1018 1145L1032 1268M993 1265L1072 1230M690 1458L730 1490 785 1495 815 1518M925 1518L955 1495 1060 1465 1200 1500 1310 1518",
    rail: "M0 684L690 638 1437 556",
    boundary: "M0 210L235 147 258 152 275 137 800 4",
    labels: [["Coates", 230, 508]],
  },
];

const layer = (k: keyof Tile, cls: string, w: number, dash?: string) => (
  <g className={cls} strokeWidth={w} strokeDasharray={dash} strokeLinejoin="round">
    {tiles.map((t, i) =>
      t[k] ? <path key={i} d={t[k] as string} transform={`translate(${t.at[0]} ${t.at[1]})`} /> : null,
    )}
  </g>
);

function MapCanvas() {
  return (
    <svg viewBox="60 826 1919 1000" className="block h-[1000px] w-[1919px] bg-[#e3e4d4]" role="img" aria-label="Map of the Peterborough area">
      <g transform="translate(60 820) scale(0.33333)">
        {layer("town", "fill-[#dfdecb] stroke-none", 0)}
        {layer("park", "fill-[#cfdeba] stroke-none", 0)}
        {layer("wood", "fill-[#c0d8a7] stroke-none", 0)}
        {layer("water", "fill-[#94c0e2] stroke-none", 0)}
        {layer("river", "fill-none stroke-[#94c0e2]", 7)}
        {layer("stream", "fill-none stroke-[#94c0e2]", 5)}
        {layer("lane", "fill-none stroke-white", 4)}
        {layer("road", "fill-none stroke-white", 8)}
        {layer("trunk", "fill-none stroke-white", 12)}
        {layer("rail", "fill-none stroke-[#bab2a5]", 3.5)}
        {layer("railMain", "fill-none stroke-[#b5ada0]", 6)}
        {layer("county", "fill-none stroke-[#a9a9a5]/80", 8, "20 12")}
        {layer("area", "fill-[#8a88b7] stroke-black", 6.5)}
        {layer("boundary", "fill-none stroke-[#ff0000]", 12)}
        {layer("boundary", "fill-none stroke-[#b86464]", 12, "20 20")}
        <g className="fill-[#0b0b0b] stroke-white/80 font-['Noto_Sans'] [paint-order:stroke]" strokeWidth={16} strokeLinejoin="round">
          {tiles.map((t) =>
            t.labels?.map(([s, x, y, big]) => (
              <text key={s} x={t.at[0] + x - 4} y={t.at[1] + y - 2} fontSize={big ? 91 : 74}>
                {s}
              </text>
            )),
          )}
        </g>
      </g>
    </svg>
  );
}

function MapPanel() {
  return (
    <div className="relative mt-[61px] -ml-1 h-[1000px] w-[1919px] overflow-hidden">
      <MapCanvas />
      <div className="absolute top-5 right-5 flex w-[58px] flex-col gap-5">
        <div className="flex flex-col rounded-lg bg-white shadow-[0_0_0_4px_rgba(0,0,0,0.1)]">
          <button className="h-[58px]">
            <svg viewBox="0 0 29 29" className="size-[58px] fill-[#333]"><path d="M14.5 8.5c-.75 0-1.5.75-1.5 1.5v3h-3c-.75 0-1.5.75-1.5 1.5S9.25 16 10 16h3v3c0 .75.75 1.5 1.5 1.5S16 19.75 16 19v-3h3c.75 0 1.5-.75 1.5-1.5S19.75 13 19 13h-3v-3c0-.75-.75-1.5-1.5-1.5" /></svg>
          </button>
          <button className="h-[58px] border-t-2 border-[#ddd]">
            <svg viewBox="0 0 29 29" className="-mt-0.5 size-[58px] fill-[#333]"><path d="M10 13c-.75 0-1.5.75-1.5 1.5S9.25 16 10 16h9c.75 0 1.5-.75 1.5-1.5S19.75 13 19 13z" /></svg>
          </button>
          <button className="h-[58px] border-t-2 border-[#ddd]">
            <svg viewBox="0 0 29 29" className="-mt-0.5 size-[58px]"><path fill="#333" d="m10.5 14 4-8 4 8z" /><path fill="#ccc" d="m10.5 16 4 8 4-8z" /></svg>
          </button>
        </div>
        <button className="h-[58px] rounded-lg bg-white shadow-[0_0_0_4px_rgba(0,0,0,0.1)]">
          <svg viewBox="0 0 29 29" className="size-[58px] fill-[#333]"><path d="M24 16v5.5c0 1.75-.75 2.5-2.5 2.5H16v-1l3-1.5-4-5.5 1-1 5.5 4 1.5-3zM6 16l1.5 3 5.5-4 1 1-4 5.5 3 1.5v1H7.5C5.75 24 5 23.25 5 21.5V16zm7-11v1l-3 1.5 4 5.5-1 1-5.5-4L6 13H5V7.5C5 5.75 5.75 5 7.5 5zm11 2.5c0-1.75-.75-2.5-2.5-2.5H16v1l3 1.5-4 5.5 1 1 5.5-4 1.5 3h1z" /></svg>
        </button>
      </div>
      <div className="absolute bottom-5 left-[19px] h-11 w-[147px] border-4 border-t-0 border-[#333] bg-white/75 pl-2.5 font-['Liberation_Sans'] text-[20px] leading-[42px] text-[#333]">3 km</div>
      <div className="absolute right-5 bottom-5 flex h-12 w-[634px] items-center justify-between rounded-full bg-white pl-[15px] text-[24px] tracking-[-0.16px] text-[#404040]">
        <span className="pt-px whitespace-nowrap">MapLibre <span className="text-black">|</span> © MapTiler © OpenStreetMap contributors</span>
        <span className="size-12 rounded-full bg-black/5">
          <svg viewBox="0 0 20 20" className="size-12" fillRule="evenodd"><path d="M4 10a6 6 0 1 0 12 0 6 6 0 1 0-12 0m5-3a1 1 0 1 0 2 0 1 1 0 1 0-2 0m0 3a1 1 0 1 1 2 0v3a1 1 0 1 1-2 0" /></svg>
        </span>
      </div>
    </div>
  );
}

const issues = [
  { text: "4 start dates are invalid dates", row: "h-[100px]", link: "" },
  { text: "2 entry dates are in the future", row: "h-[100px]", link: "" },
  { text: "1 documentation URL is an invalid URL", row: "h-[100px]", link: "tracking-[-0.35px]" },
  { text: "44 documentation URLs are missing", row: "h-[102px]", link: "" },
];

export default function App() {
  return (
    <div className="min-h-[2880px] w-[2048px] bg-white font-['Roboto',sans-serif] text-[37px] text-[#0b0c0c]">
      <header className="flex h-[118px] items-center gap-3.5 border-b-[18px] border-[#1d70b8] bg-[#0b0c0c] pl-16 text-white">
        <svg viewBox="0 0 132 97" className="-mt-1 h-[53px] w-[72px] fill-white"><path d="M25 30.2c3.5 1.5 7.7-.2 9.1-3.7 1.5-3.6-.2-7.8-3.9-9.2-3.6-1.4-7.6.3-9.1 3.9-1.4 3.5.3 7.5 3.9 9zM9 39.5c3.6 1.5 7.8-.2 9.2-3.7 1.5-3.6-.2-7.8-3.9-9.1-3.6-1.5-7.6.2-9.1 3.8-1.4 3.5.3 7.5 3.8 9zM4.4 57.2c3.5 1.5 7.7-.2 9.1-3.8 1.5-3.6-.2-7.7-3.9-9.1-3.5-1.5-7.6.3-9.1 3.8-1.4 3.5.3 7.6 3.9 9.1zm38.3-21.4c3.5 1.5 7.7-.2 9.1-3.8 1.5-3.6-.2-7.7-3.9-9.1-3.6-1.5-7.6.3-9.1 3.8-1.3 3.6.4 7.7 3.9 9.1zm64.4-5.6c-3.6 1.5-7.8-.2-9.1-3.7-1.5-3.6.2-7.8 3.8-9.2 3.6-1.4 7.7.3 9.2 3.9 1.3 3.5-.4 7.5-3.9 9zm15.9 9.3c-3.6 1.5-7.7-.2-9.1-3.7-1.5-3.6.2-7.8 3.7-9.1 3.6-1.5 7.7.2 9.2 3.8 1.5 3.5-.3 7.5-3.8 9zm4.7 17.7c-3.6 1.5-7.8-.2-9.2-3.8-1.5-3.6.2-7.7 3.9-9.1 3.6-1.5 7.7.3 9.2 3.8 1.3 3.5-.4 7.6-3.9 9.1zM89.3 35.8c-3.6 1.5-7.8-.2-9.2-3.8-1.4-3.6.2-7.7 3.9-9.1 3.6-1.5 7.7.3 9.2 3.8 1.4 3.6-.3 7.7-3.9 9.1zM69.7 17.7l8.9 4.7V9.3l-8.9 2.8c-.2-.3-.5-.6-.9-.9L72.4 0H59.6l3.5 11.2c-.3.3-.6.5-.9.9l-8.8-2.8v13.1l8.8-4.7c.3.3.6.7.9.9l-5 15.4v.1c-.2.8-.4 1.6-.4 2.4 0 4.1 3.1 7.5 7 8.1h.2c.3 0 .7.1 1 .1.4 0 .7 0 1-.1h.2c4-.6 7.1-4.1 7.1-8.1 0-.8-.1-1.7-.4-2.4V34l-5.1-15.4c.4-.2.7-.6 1-.9zM66 92.8c16.9 0 32.8 1.1 47.1 3.2 4-16.9 8.9-26.7 14-33.5l-9.6-3.4c1 4.9 1.1 7.2 0 10.2-1.5-1.4-3-4.3-4.2-8.7L108.6 76c2.8-2 5-3.2 7.5-3.3-4.4 9.4-10 11.9-13.6 11.2-4.3-.8-6.3-4.6-5.6-7.9 1-4.7 5.7-5.9 8-.5 4.3-8.7-3-11.4-7.6-8.8 7.1-7.2 7.9-13.5 2.1-21.1-8 6.1-8.1 12.3-4.5 20.8-4.7-5.4-12.1-2.5-9.5 6.2 3.4-5.2 7.9-2 7.2 3.1-.6 4.3-6.4 7.8-13.5 7.2-10.3-.9-10.9-8-11.2-13.8 2.5-.5 7.1 1.8 11 7.3L80.2 60c-4.1 4.4-8 5.3-12.3 5.4 1.4-4.4 8-11.6 8-11.6H55.5s6.4 7.2 7.9 11.6c-4.2-.1-8-1-12.3-5.4l1.4 16.4c3.9-5.5 8.5-7.7 10.9-7.3-.3 5.8-.9 12.8-11.1 13.8-7.2.6-12.9-2.9-13.5-7.2-.7-5 3.8-8.3 7.1-3.1 2.7-8.7-4.6-11.6-9.4-6.2 3.7-8.5 3.6-14.7-4.6-20.8-5.8 7.6-5 13.9 2.2 21.1-4.7-2.6-11.9.1-7.7 8.8 2.3-5.5 7.1-4.2 8.1.5.7 3.3-1.3 7.1-5.7 7.9-3.5.7-9-1.8-13.5-11.2 2.5.1 4.7 1.3 7.5 3.3l-4.7-15.4c-1.2 4.4-2.7 7.2-4.3 8.7-1.1-3-.9-5.3 0-10.2l-9.5 3.4c5 6.9 9.9 16.7 14 33.5 14.8-2.1 30.8-3.2 47.7-3.2z" /></svg>
        <span className="font-['Noto_Sans'] text-[59px] leading-[98px] font-bold tracking-[-0.6px]">GOV.UK</span>
      </header>
      <div className="h-[132px] border-b-2 border-[#b1b4b6] bg-[#f3f2f1] pt-[38px] pl-16 text-[38px] leading-[50px] font-bold tracking-[-0.1px]">Check your planning data</div>
      <main className="pl-16">
        <a className="mt-[38px] flex h-[38px] items-start" href="#">
          <svg viewBox="0 0 12 22" className="mt-[9px] mr-[13px] -ml-[3px] h-[22px] w-3 fill-none stroke-[#505a5f] stroke-2"><path d="M11 1L1.5 11 11 21" /></svg>
          <span className="h-[38px] border-b-2 border-[#0b0c0c] text-[32px] leading-[38px] tracking-[0.4px]">Back</span>
        </a>
        <p className="mt-[104px] text-[53px] leading-[60px] text-[#505a5f]">Article 4 direction area</p>
        <h1 className="mt-3 text-[94px] leading-[100px] font-bold tracking-[-0.65px]">Your data has some issues</h1>
        <p className="mt-[63px] leading-[50px] tracking-[-0.33px] whitespace-nowrap">
          You can submit your data with these issues but should fix them over time to
          <br />
          improve the quality and usability of the data.
        </p>
        <MapPanel />
        <div className="pl-0.5">
          <h2 className="mt-24 text-[70px] leading-[80px] font-bold tracking-[0.37px]">Issues you can fix after submitting</h2>
          <ul className="mt-[52px] w-[1260px] border-t-2 border-[#b1b4b6]">
            {issues.map((it) => (
              <li key={it.text} className={`flex items-start justify-between border-b-2 border-[#b1b4b6] ${it.row}`}>
                <a href="#" className={`mt-[22px] h-11 border-b-2 border-[#1d70b8] leading-[47px] text-[#1d70b8] ${it.link}`}>{it.text}</a>
                <strong className="mt-5 h-[60px] w-[236px] bg-[#fcd6c3] text-center leading-[59px] font-normal text-[#6e3619]">Needs fixing</strong>
              </li>
            ))}
          </ul>
          <div className="mt-[60px] flex items-start">
            <button className="h-20 w-[200px] border-b-4 border-[#002d18] bg-[#00703c] leading-[76px] tracking-[0.4px] text-white">Continue</button>
            <a href="#" className="mt-[18px] ml-12 h-11 border-b-2 border-[#1d70b8] leading-[46px] tracking-[-0.12px] text-[#1d70b8]">Upload a new version</a>
          </div>
        </div>
      </main>
    </div>
  );
}
